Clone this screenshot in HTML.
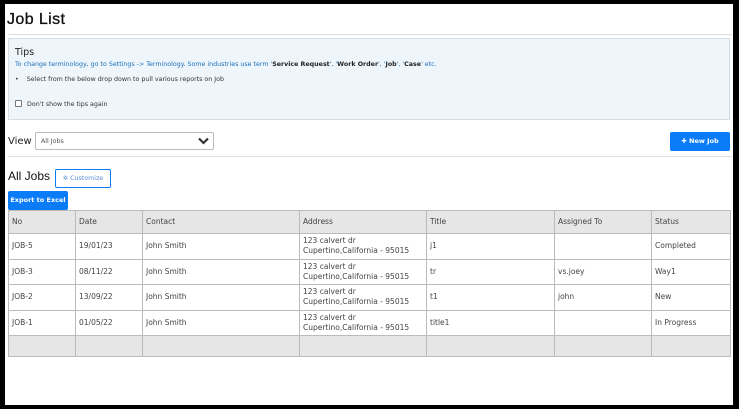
<!DOCTYPE html>
<html><head><style>
body{margin:0;width:739px;height:409px;background:#000;overflow:hidden;font-family:"DejaVu Sans","Liberation Sans",sans-serif;}
.pg{position:absolute;left:5px;top:4px;width:728px;height:401px;background:#fff;}
.a{position:absolute;}
h1{position:absolute;left:2px;top:7px;margin:0;font:16px "Liberation Sans",sans-serif;color:#111;letter-spacing:0.4px;-webkit-text-stroke:0.3px #111}
.hr{position:absolute;left:3px;width:724px;height:1px;background:#ddd;}
.tips{position:absolute;left:3px;top:34px;width:720px;height:80px;background:#eef6fc;border:1px solid #d6dde3;}
.s{font-size:6.3px;color:#333;white-space:nowrap;}
.btn{position:absolute;background:#0a7cf8;color:#fff;font-size:6.5px;font-weight:bold;text-align:center;border-radius:2px;}
table{position:absolute;left:3px;top:206px;border-collapse:collapse;font-size:7.5px;color:#444;}
td{border:1px solid #bbb;padding:0 3px;height:24.6px;vertical-align:middle;line-height:10px;}
tr.h td{background:#e6e6e6;height:22px;}
tr.f td{background:#e6e6e6;height:20px;}
</style></head><body><div class="pg">
<h1>Job List</h1>
<div class="hr" style="top:30px"></div>
<div class="tips">
<div class="a" style="left:6px;top:8px;font-size:9.5px;color:#222;">Tips</div>
<div class="a s" style="left:6px;top:22px;color:#1d6fb8;">To change terminology, go to Settings -&gt; Terminology. Some industries use term '<b style="color:#222">Service Request</b>', '<b style="color:#222">Work Order</b>', '<b style="color:#222">Job</b>', '<b style="color:#222">Case</b>' etc.</div>
<div class="a s" style="left:6px;top:37px;">•&nbsp;&nbsp;&nbsp;&nbsp;Select from the below drop down to pull various reports on Job</div>
<div class="a" style="left:6px;top:61px;width:5px;height:5px;border:1px solid #777;border-radius:1px;background:#fff"></div>
<div class="a s" style="left:18px;top:62px;">Don't show the tips again</div>
</div>
<div class="a" style="left:3px;top:132px;font-size:10px;color:#222">View</div>
<div class="a" style="left:30px;top:128px;width:177px;height:16px;border:1px solid #bbb;border-radius:2px;">
<span class="a s" style="left:5px;top:5px;color:#555">All Jobs</span>
<svg class="a" style="left:162px;top:4px" width="11" height="8" viewBox="0 0 11 8"><path d="M1 1.5 5.5 6 10 1.5" stroke="#333" stroke-width="2.2" fill="none"/></svg>
</div>
<div class="btn" style="left:665px;top:128px;width:60px;height:19px;line-height:19px;">✚ New Job</div>
<div class="hr" style="top:152px"></div>
<div class="a" style="left:3px;top:165px;font-size:12px;color:#111;font-family:'Liberation Sans',sans-serif">All Jobs</div>
<div class="a" style="left:50px;top:165px;width:54px;height:17px;border:1px solid #0a7cf8;border-radius:2px;color:#5a8fd8;font-size:6.3px;line-height:17px;text-align:center">✲ Customize</div>
<div class="btn" style="left:3px;top:187px;width:60px;height:19px;line-height:19px;">Export to Excel</div>
<table>
<tr class="h"><td style="width:60px">No</td><td style="width:60px">Date</td><td style="width:150px">Contact</td><td style="width:120px">Address</td><td style="width:121px">Title</td><td style="width:90px">Assigned To</td><td style="width:72px">Status</td></tr>
<tr><td>JOB-5</td><td>19/01/23</td><td>John Smith</td><td>123 calvert dr<br>Cupertino,California - 95015</td><td>j1</td><td></td><td>Completed</td></tr>
<tr><td>JOB-3</td><td>08/11/22</td><td>John Smith</td><td>123 calvert dr<br>Cupertino,California - 95015</td><td>tr</td><td>vs.joey</td><td>Way1</td></tr>
<tr><td>JOB-2</td><td>13/09/22</td><td>John Smith</td><td>123 calvert dr<br>Cupertino,California - 95015</td><td>t1</td><td>john</td><td>New</td></tr>
<tr><td>JOB-1</td><td>01/05/22</td><td>John Smith</td><td>123 calvert dr<br>Cupertino,California - 95015</td><td>title1</td><td></td><td>In Progress</td></tr>
<tr class="f"><td></td><td></td><td></td><td></td><td></td><td></td><td></td></tr>
</table>
</div></body></html>
